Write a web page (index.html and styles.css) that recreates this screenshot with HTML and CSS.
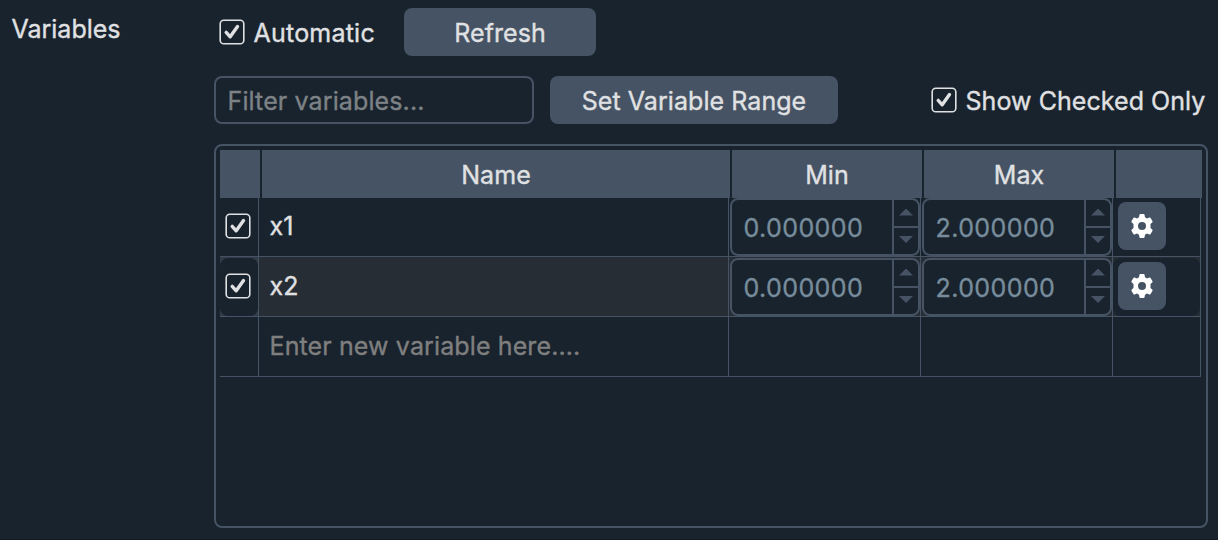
FILE: index.html
```
<!DOCTYPE html>
<html lang="en">
<head>
<meta charset="utf-8">
<title>Variables</title>
<link rel="stylesheet" href="styles.css">
</head>
<body>
<svg class="defs" width="0" height="0" aria-hidden="true">
  <symbol id="check" viewBox="0 0 26 26">
    <rect x="1.2" y="1.2" width="23.6" height="23.6" rx="3.6" fill="none" stroke="#e0e1e3" stroke-width="1.6"/>
    <path d="M7.2 13.4 L11.2 17.8 L18.5 7.6" fill="none" stroke="#e0e1e3" stroke-width="3.4" stroke-linecap="round" stroke-linejoin="round"/>
  </symbol>
  <symbol id="gear" viewBox="0 0 24 24">
    <path fill="#fff" fill-rule="evenodd" d="M9.4 .9 Q9.5 0 10.4 0 H13.6 Q14.5 0 14.6 .9 L15 3.3 L17 4.5 L19.300 3.600 Q20.100 3.300 20.600 4.100 L22.400 7.100 Q22.900 7.900 22.200 8.500 L20.500 10 V14 L22.200 15.500 Q22.900 16.100 22.400 16.900 L20.600 19.900 Q20.100 20.700 19.300 20.400 L17 19.500 L15 20.700 L14.600 23.100 Q14.500 24 13.600 24 H10.400 Q9.500 24 9.400 23.100 L9 20.700 L7 19.500 L4.700 20.400 Q3.900 20.700 3.400 19.900 L1.600 16.900 Q1.100 16.100 1.800 15.500 L3.500 14 V10 L1.800 8.500 Q1.100 7.900 1.600 7.100 L3.400 4.100 Q3.900 3.300 4.700 3.600 L7 4.500 L9 3.300 Z M12 8 A4 4 0 1 0 12 16 A4 4 0 1 0 12 8 Z"/>
  </symbol>
</svg>
<main class="panel">
  <div class="title">Variables</div>
  <section class="content">
    <div class="bar bar-top">
      <label class="option"><svg class="check"><use href="#check"/></svg><span class="label auto">Automatic</span></label>
      <button class="button refresh"><span class="label">Refresh</span></button>
    </div>
    <div class="bar bar-filter">
      <div class="filter">Filter variables...</div>
      <button class="button range"><span class="label">Set Variable Range</span></button>
      <label class="option only"><svg class="check"><use href="#check"/></svg><span class="label">Show Checked Only</span></label>
    </div>
    <div class="table">
      <div class="head">
        <div></div><div>Name</div><div>Min</div><div>Max</div><div></div>
      </div>
      <div class="body">
        <div class="row">
          <div class="cell pick"><svg class="check"><use href="#check"/></svg></div>
          <div class="cell name">x1</div>
          <div class="cell"><div class="spin"><span class="value">0.000000</span><span class="steps"><i><b class="up"></b></i><i><b class="down"></b></i></span></div></div>
          <div class="cell"><div class="spin"><span class="value">2.000000</span><span class="steps"><i><b class="up"></b></i><i><b class="down"></b></i></span></div></div>
          <div class="cell"><button class="settings" aria-label="Settings"><svg class="gear"><use href="#gear"/></svg></button></div>
        </div>
        <div class="row alt">
          <div class="cell"><div class="pick inset"><svg class="check"><use href="#check"/></svg></div></div>
          <div class="cell name">x2</div>
          <div class="cell"><div class="spin"><span class="value">0.000000</span><span class="steps"><i><b class="up"></b></i><i><b class="down"></b></i></span></div></div>
          <div class="cell"><div class="spin"><span class="value">2.000000</span><span class="steps"><i><b class="up"></b></i><i><b class="down"></b></i></span></div></div>
          <div class="cell"><div class="inset tools"><button class="settings" aria-label="Settings"><svg class="gear"><use href="#gear"/></svg></button></div></div>
        </div>
        <div class="row">
          <div class="cell"></div>
          <div class="cell name hint">Enter new variable here....</div>
          <div class="cell"></div><div class="cell"></div><div class="cell"></div>
        </div>
      </div>
    </div>
  </section>
</main>
</body>
</html>
```
FILE: styles.css
```
* { box-sizing: border-box; }
body {
  margin: 0;
  background: #19232d;
  color: #e0e1e3;
  font: 25px/30px Inter, "Liberation Sans", sans-serif;
  letter-spacing: 0.06px;
  white-space: nowrap;
  -webkit-text-stroke: 0.35px currentColor;
}
button { font: inherit; letter-spacing: inherit; color: inherit; border: 0; padding: 0; }
.defs { display: block; }
.panel {
  display: flex;
  width: 1218px;
  height: 540px;
  overflow: hidden;
  border-bottom: 1px solid #141920;
}
.title { width: 214px; padding: 14px 0 0 11.5px; flex: none; letter-spacing: 0; }
.content { width: 994px; padding-top: 8px; }
.bar { display: flex; align-items: center; height: 48px; }
.bar-top { padding-left: 5px; }
.bar-filter { margin-top: 20px; }
.option { display: flex; align-items: center; gap: 8.500px; }
.label { padding-top: 2px; }
.auto { letter-spacing: 0.22px; }
.bar-top .option { width: 185px; }
.only { margin-left: 93px; }
.check { display: block; width: 26px; height: 26px; flex: none; }
.button {
  display: flex;
  align-items: center;
  justify-content: center;
  height: 48px;
  border-radius: 8px;
  background: #455364;
}
.refresh { width: 192px; }
.range { width: 288px; margin-left: 16px; }
.filter {
  width: 320px;
  height: 48px;
  padding: 8px 0 0 11.5px;
  border: 2px solid #455364;
  border-radius: 8px;
  color: #7d8286;
  letter-spacing: 0.12px;
}
.table {
  height: 384px;
  margin-top: 20px;
  padding: 4px;
  border: 2px solid #455364;
  border-radius: 8px;
}
.head {
  position: relative;
  z-index: 1;
  display: grid;
  grid-template-columns: 40px 468px 190px 190px 86px;
  gap: 2px;
  height: 48px;
}
.head div {
  display: flex;
  align-items: center;
  justify-content: center;
  background: #455364;
  padding-top: 2px;
}
.body { margin-top: -1px; width: 981px; }
.row {
  display: grid;
  grid-template-columns: 39px 470px 192px 192px 88px;
  height: 60px;
}
.alt { background: #262d35; }
.cell {
  border-right: 1px solid #455364;
  border-bottom: 1px solid #455364;
}
.pick { display: flex; align-items: center; padding: 0 0 1px 5px; }
.name { display: flex; align-items: center; padding: 0 0 2px 10.5px; }
.hint { color: #7f7f7f; letter-spacing: 0.12px; }
.inset { height: 58px; margin-top: 1px; border-radius: 8px; background: #19232d; }
.pick.inset { padding-bottom: 2px; }
.alt > .cell:first-child { background: #323c49; }
.spin {
  display: flex;
  width: 190px;
  height: 58px;
  margin: 1px 0 0 1px;
  border: 2px solid #455364;
  border-radius: 8px;
  background: #19232d;
}
.value {
  flex: 1;
  padding: 13px 0 0 11.5px;
  color: #788d9c;
  letter-spacing: 0.42px;
}
.steps {
  width: 26px;
  border-left: 2px solid #455364;
  display: grid;
  grid-template-rows: 28px 26px;
}
.steps i { display: flex; justify-content: center; }
.steps i:first-child { border-bottom: 2px solid #455364; }
.up, .down {
  width: 14px;
  height: 7px;
  margin-top: 8.500px;
  background: #455364;
  clip-path: polygon(50% 0, 100% 100%, 0 100%);
}
.down { margin-top: 8px; clip-path: polygon(0 0, 100% 0, 50% 100%); }
.settings {
  display: flex;
  align-items: center;
  justify-content: center;
  width: 48px;
  height: 48px;
  margin: 5px 0 0 5px;
  border-radius: 8px;
  background: #455364;
}
.tools { display: flex; }
.tools .settings { margin-top: 4px; }
.gear { width: 24px; height: 24px; }
```
